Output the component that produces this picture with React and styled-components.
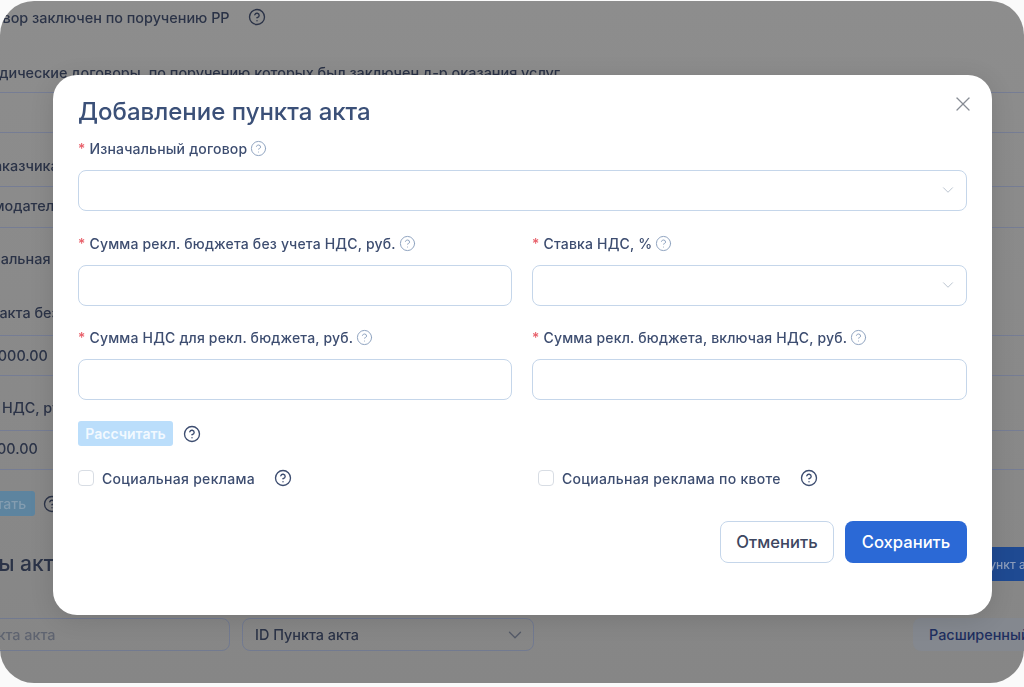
import { ChevronDown, CircleHelp, X } from "lucide-react";
import styled, { createGlobalStyle } from "styled-components";

const GlobalStyle = createGlobalStyle`
  html, body {
    margin: 0;
    height: 100%;
    background: #fafafa;
    font-family: "Inter", "Noto Sans", sans-serif;
  }
`;

const Field = ({ label, select }) => (
  <FieldWrap>
    <FieldLabel>
      <Star>*</Star>
      {label}
      <LabelHelp size={17} strokeWidth={1.4} />
    </FieldLabel>
    <InputBox>{select && <SelectArrow size={18} strokeWidth={1.3} />}</InputBox>
  </FieldWrap>
);

const CheckItem = ({ label }) => (
  <CheckWrap>
    <CheckBox />
    <CheckLabel>{label}</CheckLabel>
    <DarkHelp size={18} strokeWidth={1.8} $gap={19} />
  </CheckWrap>
);

const App = () => {
  return (
    <>
      <GlobalStyle />
      <Screen>
        <Backdrop>
          <BackTop>
            Договор заключен по поручению РР
            <BackHelp size={18} strokeWidth={1.8} />
          </BackTop>
          <BackCaption>Юридические договоры, по поручению которых был заключен д-р оказания услуг</BackCaption>
          <BackRow $h={40} $pad={0} />
          <BackRow $h={54} $pad={12} $shift={-10}>Тип заказчика</BackRow>
          <BackRow $h={41} $pad={13} $shift={-16}>Рекламодатель</BackRow>
          <BackRow $h={50} $pad={10} $shift={-3}>Социальная реклама</BackRow>
          <BackRow $h={58} $pad={14} $plain $shift={-21}>Сумма акта без учета НДС</BackRow>
          <BackRow $h={40} $pad={11} $shift={21}>1 000.00</BackRow>
          <BackRow $h={55} $pad={14} $shift={35}>НДС, руб.</BackRow>
          <BackRow $h={40} $pad={12} $last $shift={24}>100.00</BackRow>
          <CalcBackRow>
            <CalcBack>Рассчитать</CalcBack>
            <BackHelp size={18} strokeWidth={1.8} />
          </CalcBackRow>
          <BackHeading>
            <HeadingText>Пункты акта</HeadingText>
            <AddBack>Добавить пункт акта</AddBack>
          </BackHeading>
          <BackFilters>
            <BackInput>
              <PlaceholderText>ID пункта акта</PlaceholderText>
            </BackInput>
            <BackSelect>
              ID Пункта акта
              <ChevronDown size={22} strokeWidth={1.4} color="#555b68" />
            </BackSelect>
            <BackExtra>Расширенный</BackExtra>
          </BackFilters>
        </Backdrop>

        <Modal>
          <TitleRow>
            <Title>Добавление пункта акта</Title>
            <CloseIcon size={24} strokeWidth={1.3} />
          </TitleRow>
          <Field label="Изначальный договор" select />
          <FieldGrid>
            <Field label="Сумма рекл. бюджета без учета НДС, руб." />
            <Field label="Ставка НДС, %" select />
            <Field label="Сумма НДС для рекл. бюджета, руб." />
            <Field label="Сумма рекл. бюджета, включая НДС, руб." />
          </FieldGrid>
          <CalcRow>
            <CalcButton>Рассчитать</CalcButton>
            <DarkHelp size={18} strokeWidth={1.8} $gap={10} />
          </CalcRow>
          <CheckRow>
            <CheckItem label="Социальная реклама" />
            <CheckItem label="Социальная реклама по квоте" />
          </CheckRow>
          <Actions>
            <CancelButton>Отменить</CancelButton>
            <SaveButton>Сохранить</SaveButton>
          </Actions>
        </Modal>
      </Screen>
    </>
  );
};

const Screen = styled.div`
  position: relative;
  width: 1024px;
  height: 682px;
  margin-top: 1px;
  border-radius: 34px;
  overflow: hidden;
  background: linear-gradient(#8d8d8d, #868686);
  filter: blur(0.35px);
`;

const Backdrop = styled.div`
  width: 1101px;
  margin-left: -33px;
  padding-top: 6px;
  color: #2b3347;
  font-size: 14.4px;
  font-weight: 500;
`;

const BackTop = styled.div`
  display: flex;
  align-items: center;
  gap: 18px;
  height: 20px;
`;

const BackHelp = styled(CircleHelp)`
  flex-shrink: 0;
  color: #2b3347;
`;

const BackCaption = styled.div`
  height: 28px;
  margin-top: 37px;
  white-space: nowrap;
`;

const BackRow = styled.div`
  display: flex;
  align-items: flex-end;
  box-sizing: border-box;
  height: ${({ $h }) => $h}px;
  padding-bottom: ${({ $pad }) => $pad}px;
  border-top: ${({ $plain }) => ($plain ? "none" : "1px solid #767d94")};
  border-bottom: ${({ $last }) => ($last ? "1px solid #767d94" : "none")};
  text-indent: ${({ $shift }) => $shift || 0}px;
  white-space: nowrap;
`;

const CalcBackRow = styled.div`
  display: flex;
  align-items: center;
  gap: 8px;
  margin-top: 21px;
  margin-left: -29px;
`;

const CalcBack = styled.div`
  display: flex;
  align-items: center;
  justify-content: center;
  width: 97px;
  height: 25px;
  border-radius: 3px;
  background: #5d849f;
  color: #849db0;
  font-size: 14px;
`;

const BackHeading = styled.div`
  display: flex;
  justify-content: space-between;
  align-items: center;
  height: 34px;
  margin-top: 31px;
  font-size: 21px;
`;

const HeadingText = styled.span`
  margin: -2px 0 0 -31px;
`;

const AddBack = styled.div`
  display: flex;
  align-items: center;
  justify-content: center;
  width: 170px;
  height: 34px;
  background: #1f4a92;
  color: #8b9cbb;
  font-size: 12px;
`;

const BackFilters = styled.div`
  display: flex;
  align-items: center;
  margin-top: 37px;
`;

const BackInput = styled.div`
  display: flex;
  align-items: center;
  box-sizing: border-box;
  width: 263px;
  height: 33px;
  border: 1px solid #727a90;
  border-radius: 8px;
  color: #5f6470;
  white-space: nowrap;
`;

const PlaceholderText = styled.span`
  margin-left: -14px;
`;

const BackSelect = styled(BackInput)`
  justify-content: space-between;
  width: 292px;
  margin-left: 12px;
  padding: 0 7px 0 12px;
  color: #2b3347;
`;

const BackExtra = styled.div`
  display: flex;
  align-items: center;
  width: 130px;
  height: 33px;
  margin-left: 379px;
  padding-left: 16px;
  border-radius: 8px;
  background: #84888f;
  color: #1f2f5f;
  white-space: nowrap;
`;

const Modal = styled.div`
  position: absolute;
  top: 74px;
  left: 53px;
  box-sizing: border-box;
  width: 939px;
  height: 540px;
  padding: 24px 25px 0;
  border-radius: 24px;
  background: #fff;
  box-shadow: 0 4px 24px rgba(0, 0, 0, 0.12);
`;

const TitleRow = styled.div`
  display: flex;
  align-items: flex-start;
  justify-content: space-between;
  height: 40px;
`;

const Title = styled.h2`
  margin: 0;
  color: #3b5078;
  font-size: 24px;
  font-weight: 500;
  line-height: 26px;
`;

const CloseIcon = styled(X)`
  margin: -7px -8px 0 0;
  color: #878c94;
`;

const FieldWrap = styled.div`
  display: flex;
  flex-direction: column;
  gap: 12px;
`;

const FieldLabel = styled.label`
  display: flex;
  align-items: center;
  height: 19px;
  color: #3d4d70;
  font-size: 14px;
  font-weight: 500;
  letter-spacing: 0.18px;
`;

const Star = styled.span`
  margin-right: 4px;
  color: #e8606a;
  font-size: 14px;
`;

const LabelHelp = styled(CircleHelp)`
  margin-left: 3px;
  color: #8fa3bf;
`;

const InputBox = styled.div`
  position: relative;
  box-sizing: border-box;
  height: 41px;
  border: 1px solid #c5d6ea;
  border-radius: 8px;
  background: #fff;
`;

const SelectArrow = styled(ChevronDown)`
  position: absolute;
  top: 10px;
  right: 9px;
  color: #b9c3cf;
`;

const FieldGrid = styled.div`
  display: grid;
  grid-template-columns: 434px 435px;
  column-gap: 20px;
  row-gap: 22px;
  margin-top: 23px;
`;

const CalcRow = styled.div`
  display: flex;
  align-items: center;
  margin-top: 21px;
`;

const CalcButton = styled.button`
  width: 95px;
  height: 25px;
  padding: 0;
  border: none;
  border-radius: 3px;
  background: #bbdefb;
  color: #f2f9ff;
  font-family: inherit;
  font-size: 14px;
  font-weight: 600;
`;

const DarkHelp = styled(CircleHelp)`
  flex-shrink: 0;
  margin-left: ${({ $gap }) => $gap}px;
  color: #3d4d70;
`;

const CheckRow = styled.div`
  display: grid;
  grid-template-columns: 460px 1fr;
  margin-top: 22px;
`;

const CheckWrap = styled.div`
  display: flex;
  align-items: center;
  height: 20px;
`;

const CheckBox = styled.span`
  box-sizing: border-box;
  width: 16px;
  height: 16px;
  border: 1px solid #d8dde4;
  border-radius: 4px;
`;

const CheckLabel = styled.span`
  margin-left: 8px;
  color: #3d4d70;
  font-size: 14px;
  font-weight: 500;
  letter-spacing: 0.3px;
`;

const Actions = styled.div`
  display: flex;
  justify-content: flex-end;
  gap: 11px;
  margin-top: 33px;
`;

const CancelButton = styled.button`
  box-sizing: border-box;
  width: 114px;
  height: 42px;
  padding: 0;
  border: 1px solid #c5d6ea;
  border-radius: 8px;
  background: #fff;
  color: #3d4660;
  font-family: inherit;
  font-size: 16.6px;
  font-weight: 500;
`;

const SaveButton = styled(CancelButton)`
  width: 122px;
  border: none;
  background: #2b69d6;
  color: #fff;
`;

export default App;
